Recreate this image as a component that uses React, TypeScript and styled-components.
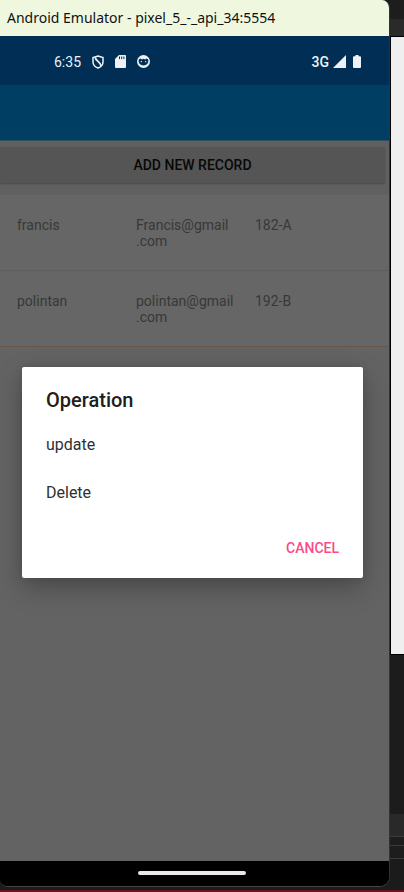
import React from "react";
import styled, { createGlobalStyle } from "styled-components";

const GlobalStyle = createGlobalStyle`
  * { box-sizing: border-box; }
  body { margin: 0; background: #1b1b1b; font-family: Roboto, sans-serif; }
  button { font-family: inherit; border: 0; cursor: pointer; }
`;

const Desktop = styled.div`
  display: grid;
  grid-template-columns: minmax(0, 1fr) 14px;
  min-height: 100vh;
  background: #1b1b1b;
  border-bottom: 2px solid #651522;
`;

const EmulatorWindow = styled.main`
  display: flex;
  flex-direction: column;
  margin-bottom: 3px;
  border-right: 1px solid #333333;
  border-bottom: 1px solid #444444;
  border-radius: 0 8px 10px 8px;
  overflow: hidden;
  background: #000000;
`;

const TitleBar = styled.header`
  display: flex;
  align-items: center;
  height: 36px;
  padding-left: 7px;
  background: #eff8df;
  color: #111111;
  font: 14px/20px "Noto Sans", sans-serif;
  white-space: nowrap;
`;

const StatusBar = styled.div`
  display: flex;
  align-items: center;
  justify-content: space-between;
  height: 49px;
  padding: 2px 28px 0 54px;
  background: #002e54;
  color: #eef2f6;
  font-size: 14px;
  font-weight: 500;
`;

const StatusGroup = styled.div<{ $gap: number }>`
  display: flex;
  align-items: center;
  gap: ${(p) => p.$gap}px;
  svg { display: block; }
`;

const Clock = styled.time`
  font-weight: 400;
`;

const Screen = styled.div`
  position: relative;
  display: flex;
  flex: 1;
  flex-direction: column;
  background: #636363;
`;

const AppBar = styled.div`
  height: 56px;
  background: #003f63;
  border-bottom: 1px solid #30505f;
`;

const Toolbar = styled.div`
  padding: 6px 4px 12px 0;
  background: #606060;
`;

const AddButton = styled.button`
  display: block;
  width: 100%;
  height: 36px;
  border-radius: 2px;
  background: #555555;
  color: #080808;
  font-size: 14px;
  font-weight: 500;
  box-shadow: 0 1px 2px #484848;
`;

const Records = styled.table`
  width: 100%;
  table-layout: fixed;
  border-collapse: separate;
  border-spacing: 0;
  background: #666666;
  color: #383838;
  font-size: 14px;
  line-height: 16px;
`;

const Column = styled.col<{ $width?: string }>`
  width: ${(p) => p.$width ?? "auto"};
`;

const RecordRow = styled.tr<{ $line: string }>`
  height: 76px;
  td { border-bottom: 1px solid ${(p) => p.$line}; }
`;

const Cell = styled.td`
  padding: 22px 0 20px 17px;
  vertical-align: top;
`;

const Overlay = styled.div`
  position: absolute;
  inset: 0;
  display: grid;
  align-items: center;
  padding: 0 26px 2px 22px;
`;

const Dialog = styled.section`
  padding: 20px 16px 12px 24px;
  border-radius: 2px;
  background: #ffffff;
  color: #303030;
  box-shadow: 0 10px 26px rgba(0, 0, 0, 0.26), 0 0 8px rgba(0, 0, 0, 0.1);
`;

const DialogTitle = styled.h1`
  margin: 0 0 10px;
  color: #202020;
  font-size: 20px;
  font-weight: 500;
  line-height: 26px;
`;

const Choice = styled.button`
  display: block;
  width: 100%;
  height: 48px;
  padding: 0 0 4px;
  background: transparent;
  color: #303030;
  font-size: 16px;
  text-align: left;
`;

const DialogActions = styled.div`
  display: flex;
  justify-content: flex-end;
  margin-top: 11px;
`;

const CancelButton = styled.button`
  height: 36px;
  padding: 0 8px;
  background: transparent;
  color: #fa4b86;
  font-size: 14px;
  font-weight: 500;
`;

const NavigationBar = styled.nav`
  display: grid;
  justify-content: center;
  align-items: center;
  height: 25px;
  padding: 0 5px 2px 0;
  background: #000000;
`;

const HomeHandle = styled.button`
  width: 108px;
  height: 4px;
  padding: 0;
  border-radius: 2px;
  background: #e8e8e8;
`;

const Backdrop = styled.aside`
  display: flex;
  flex-direction: column;
  background: #1c1c1c;
`;

const BackdropBand = styled.div<{ $height?: number; $color: string }>`
  flex: ${(p) => (p.$height ? `0 0 ${p.$height}px` : "1")};
  background: ${(p) => p.$color};
`;

const BackdropPage = styled.div`
  flex: 0 0 619px;
  border: 1px solid #000000;
  border-right: 0;
  background: #efefef;
`;

const ShieldIcon = () => (
  <svg width="12" height="14" viewBox="0 0 12 14" fill="none" stroke="currentColor">
    <path d="M6 1 11 2.6V7c0 3-2 5-5 6-3-1-5-3-5-6V2.6Z" strokeWidth="1.5" />
    <path d="M3.2 2.4c.3 3.6 5.4 4.4 6 8.6" strokeWidth="1.8" />
  </svg>
);

const SdCardIcon = () => (
  <svg width="11" height="13" viewBox="0 0 11 13" fill="currentColor">
    <path d="M4 0h6a1 1 0 0 1 1 1v11a1 1 0 0 1-1 1H1a1 1 0 0 1-1-1V4Z" />
    <path d="M4.5 1.5v2.6M6.7 1.5v2.6M8.9 1.5v2.6" stroke="#002e54" strokeWidth="1" />
  </svg>
);

const FaceIcon = () => (
  <svg width="13" height="13" viewBox="0 0 13 13" fill="none">
    <circle cx="6.5" cy="6.5" r="6.5" fill="currentColor" />
    <path d="M2 4.2 3.5 3.4l1.4 1 1.6-.6 1.6.6 1.4-1 1.5.8c.7 1.8.2 3.6-.8 4.8-1.8 1.9-5.6 1.9-7.4 0-1-1.2-1.5-3-.8-4.8Z" fill="#002e54" />
    <path d="M4.3 5.9v1.3M8.7 5.9v1.3" stroke="currentColor" strokeWidth="1.1" />
  </svg>
);

const SignalIcon = () => (
  <svg width="13" height="13" viewBox="0 0 13 13" fill="currentColor">
    <path d="M13 0v13H0Z" />
  </svg>
);

const BatteryIcon = () => (
  <svg width="8" height="13" viewBox="0 0 8 13" fill="currentColor">
    <path d="M2.5 0h3v1.2H7a1 1 0 0 1 1 1V12a1 1 0 0 1-1 1H1a1 1 0 0 1-1-1V2.2a1 1 0 0 1 1-1h1.5Z" />
  </svg>
);

const records = [
  { name: "francis", user: "Francis@gmail", room: "182-A", line: "#5c5e60" },
  { name: "polintan", user: "polintan@gmail", room: "192-B", line: "#69564b" },
];

export default function App() {
  return (
    <>
      <GlobalStyle />
      <Desktop>
        <EmulatorWindow>
          <TitleBar>Android Emulator - pixel_5_-_api_34:5554</TitleBar>
          <StatusBar>
            <StatusGroup $gap={11}>
              <Clock>6:35</Clock>
              <ShieldIcon />
              <SdCardIcon />
              <FaceIcon />
            </StatusGroup>
            <StatusGroup $gap={4}>
              <span>3G</span>
              <StatusGroup $gap={7}>
                <SignalIcon />
                <BatteryIcon />
              </StatusGroup>
            </StatusGroup>
          </StatusBar>
          <Screen>
            <AppBar />
            <Toolbar>
              <AddButton type="button">ADD NEW RECORD</AddButton>
            </Toolbar>
            <Records>
              <colgroup>
                <Column $width="119px" />
                <Column $width="119px" />
                <Column />
              </colgroup>
              <tbody>
                {records.map((r) => (
                  <RecordRow key={r.name} $line={r.line}>
                    <Cell>{r.name}</Cell>
                    <Cell>
                      {r.user}
                      <wbr />
                      .com
                    </Cell>
                    <Cell>{r.room}</Cell>
                  </RecordRow>
                ))}
              </tbody>
            </Records>
            <Overlay>
              <Dialog role="dialog" aria-modal="true" aria-labelledby="dialog-title">
                <DialogTitle id="dialog-title">Operation</DialogTitle>
                <Choice type="button">update</Choice>
                <Choice type="button">Delete</Choice>
                <DialogActions>
                  <CancelButton type="button">CANCEL</CancelButton>
                </DialogActions>
              </Dialog>
            </Overlay>
          </Screen>
          <NavigationBar>
            <HomeHandle type="button" aria-label="Home" />
          </NavigationBar>
        </EmulatorWindow>
        <Backdrop>
          <BackdropBand $height={19} $color="#1d1d1d" />
          <BackdropBand $height={17} $color="#2a2a2a" />
          <BackdropPage />
          <BackdropBand $color="#1c1c1c" />
          <BackdropBand $height={22} $color="#292929" />
          <BackdropBand $height={1} $color="#3b3b3b" />
          <BackdropBand $height={8} $color="#1d1d1d" />
          <BackdropBand $height={1} $color="#3b3b3b" />
          <BackdropBand $height={12} $color="#1d1d1d" />
          <BackdropBand $height={1} $color="#3b3b3b" />
          <BackdropBand $height={31} $color="#1b1b1b" />
        </Backdrop>
      </Desktop>
    </>
  );
}
